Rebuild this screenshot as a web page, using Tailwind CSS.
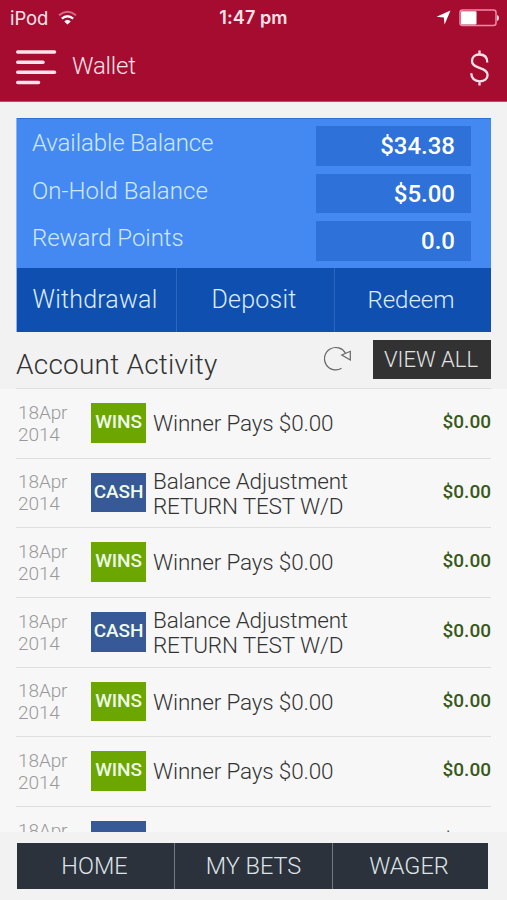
<!DOCTYPE html>
<html lang="en">
<head>
<meta charset="utf-8">
<title>Wallet</title>
<script src="https://cdn.jsdelivr.net/npm/@tailwindcss/browser@4"></script>
</head>
<body class="w-[507px] h-[900px] overflow-hidden bg-[#f2f2f3] font-['Roboto',sans-serif] font-light flex flex-col">
<header class="h-[102px] shrink-0 bg-[#a60c30] border-b border-[#b9506a] text-[#fbe3ea]">
  <div class="h-[34px] grid grid-cols-3 items-center pl-[10px] pr-[8px]">
    <div class="flex items-center gap-[10px]">
      <span class="font-['Inter','Liberation_Sans',sans-serif] font-normal text-[18.500px] leading-[34px] tracking-[-0.1px]">iPod</span>
      <svg class="w-[19px] h-[16px]" viewBox="0 0 19 16" fill="none" stroke-linecap="butt"><path d="M1 5.2Q9.5 -1.6 18 5.2" stroke="#d76c87" stroke-width="2"/><path d="M3.8 8.6Q9.5 3.8 15.2 8.6" stroke="#fff" stroke-width="2.3"/><path d="M6.3 11.4Q9.5 8.6 12.7 11.4L9.5 14.6Z" fill="#fff"/></svg>
    </div>
    <div class="text-center font-['Inter','Liberation_Sans',sans-serif] font-semibold text-[18px] leading-[35px] tracking-[0.1px] pr-[2px]">1:47 pm</div>
    <div class="flex items-center justify-end gap-[8px]">
      <svg class="w-[15px] h-[15px]" viewBox="0 0 15 15"><path d="M14.5 .5L8.6 14.5L7.8 7.4L.5 6.7Z" fill="#fff"/></svg>
      <svg class="w-[40px] h-[18px]" viewBox="0 0 40 18"><rect x="1" y="1" width="36" height="15.6" rx="2.5" fill="none" stroke="#f08ba4" stroke-width="1.5"/><rect x="2" y="2.2" width="15.5" height="13.2" rx="1" fill="#fff"/><path d="M38 6Q40 6.500 40 9Q40 11.500 38 12Z" fill="#fbe3ea"/></svg>
    </div>
  </div>
  <div class="h-[67px] flex items-start pl-[16px] pr-[18px]">
    <svg class="w-[41px] h-[36px] mt-[15px]" viewBox="0 0 41 36" stroke="#fbe3ea" stroke-width="3.6" stroke-linecap="round"><path d="M1.800 3H38.500M1.800 13.200H27M1.800 23.200H38.500M1.800 33.500H22.500"/></svg>
    <h1 class="ml-[15px] mt-[18px] text-[24px] leading-[28px] tracking-[-0.2px]">Wallet</h1>
    <svg class="ml-auto w-[20px] h-[38px] mt-[15px]" viewBox="0 0 20 38" fill="none" stroke="#fbe3ea" stroke-width="2.300"><path d="M10.500 1.500V5.500M10.500 32V36.500M18.300 13.500C18.300 8.300 15.500 5.500 10.400 5.500C5.800 5.500 3 8.300 3 12C3 16 6 17.300 10.400 18.800C15.500 20.500 18.600 22 18.600 26C18.600 29.800 15.300 32.300 10.600 32.300C5.600 32.300 2.300 29.300 2.300 24.300"/></svg>
  </div>
</header>
<section class="mt-[16px] mx-[16px] h-[214px] shrink-0 flex flex-col text-[#cfe8ff] border-l border-[#87b4f8] bg-[#4489f1]">
  <div class="h-[150px] border-t border-[#2e6fd6] pl-[15px] pr-[20px] pt-[7px] flex flex-col gap-[8px] text-[24px]">
    <div class="flex justify-between h-[39.500px]"><span class="leading-[35px] tracking-[-0.1px]">Available Balance</span><span class="w-[155px] bg-[#2d71d9] pr-[16px] text-right font-medium text-white leading-[40px]">$34.38</span></div>
    <div class="flex justify-between h-[39.500px]"><span class="leading-[34px] tracking-[0.050px]">On-Hold Balance</span><span class="w-[155px] bg-[#2d71d9] pr-[16px] text-right font-medium text-white leading-[40px]">$5.00</span></div>
    <div class="flex justify-between h-[39.500px]"><span class="leading-[35px] tracking-[-0.050px]">Reward Points</span><span class="w-[155px] bg-[#2d71d9] pr-[16px] text-right font-medium text-white leading-[40px]">0.0</span></div>
  </div>
  <nav class="h-[64px] grid grid-cols-[160px_158px_1fr] bg-[#0f4fb0] text-[25px] leading-[64px] text-center text-[#dcecff]">
    <a class="border-r border-[#2c66be] pr-[3px] tracking-[0.2px]">Withdrawal</a><a class="border-r border-[#2c66be] pr-[3px] tracking-[0.2px]">Deposit</a><a class="text-[24px] pr-[4px]">Redeem</a>
  </nav>
</section>
<div class="h-[57px] shrink-0 mx-[16px] border-b border-[#dfdfdf] flex items-start text-[#333]">
  <h2 class="text-[28px] leading-[32px] mt-[17px] tracking-[0.220px]">Account Activity</h2>
  <svg class="ml-auto mr-[21px] mt-[14px] w-[28px] h-[26px]" viewBox="0 0 28 26" fill="none" stroke="#666" stroke-width="1.200"><path d="M17.500 22.300A11.200 11.200 0 1 1 21.500 7.300"/><path d="M17.800 9L26.300 5.300L26.300 14Z"/></svg>
  <a class="mt-[7.500px] w-[118px] h-[39.500px] bg-[#323232] text-[#e3e3e3] text-[22px] leading-[39px] text-center pr-[2px]">VIEW ALL</a>
</div>
<main id="activity" class="h-[443px] shrink-0 overflow-hidden px-[16px] bg-[#f7f7f7]"></main>
<footer class="h-[68px] shrink-0 pt-[11px] pl-[17px] pr-[19px]">
  <nav class="h-[46px] grid grid-cols-[158px_158px_1fr] bg-[#2b323b] text-[#dfe3e8] text-[23.500px] leading-[46px] text-center">
    <a class="border-r border-[#727981] pr-[2px]">HOME</a><a class="border-r border-[#727981]">MY BETS</a><a class="pr-[3px]">WAGER</a>
  </nav>
</footer>
<script>
const wins = ['WINS', 'bg-[#6ca600]', 'Winner Pays $0.00', 'pt-[22px]'];
const cash = ['CASH', 'bg-[#375997]', 'Balance Adjustment<br>RETURN TEST W/D', 'pt-[10px]'];
const cashShort = ['CASH', 'bg-[#375997]', 'Balance Adjustment', 'pt-[24px]'];
document.getElementById('activity').innerHTML = [wins, cash, wins, cash, wins, wins, cashShort].map(([tag, color, text, pad]) => `
<div class="h-[69.700px] border-b border-[#dedede] flex items-start">
  <div class="w-[75px] pl-[2px] pt-[12.500px] text-[19px] leading-[22px] text-[#999] tracking-[-0.1px]">18Apr<br>2014</div>
  <div class="w-[55px] h-[39.500px] mt-[14px] ${color} text-[#eefbe8] font-medium text-[19px] leading-[38px] text-center tracking-[-0.1px]">${tag}</div>
  <div class="pl-[7px] ${pad} text-[22.500px] leading-[25px] text-[#333] tracking-[-0.170px]">${text}</div>
  <div class="ml-auto pt-[22px] text-[19px] leading-[22px] font-medium text-[#38591a]">$0.00</div>
</div>`).join('');
</script>
</body>
</html>
